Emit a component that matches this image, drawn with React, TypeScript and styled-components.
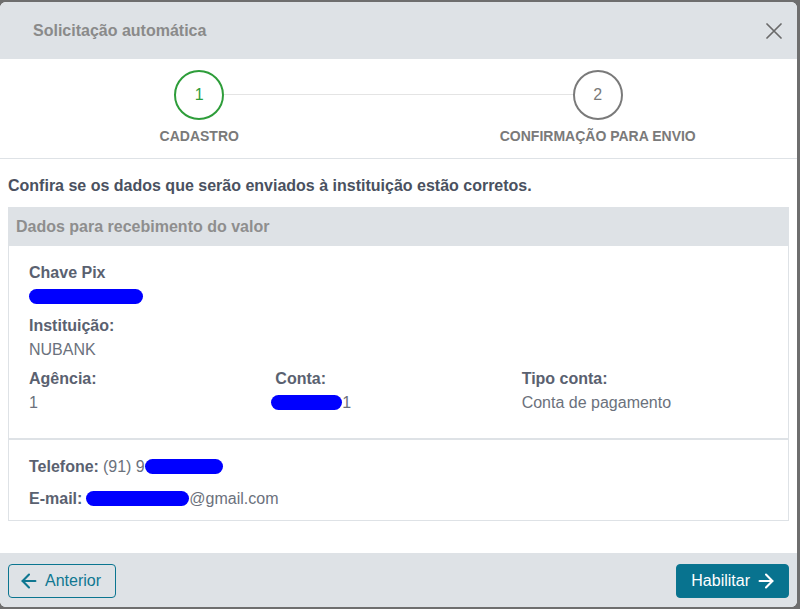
import React from 'react';
import styled, { createGlobalStyle } from 'styled-components';
import { ArrowLeft, ArrowRight } from 'lucide-react';

const GlobalStyle = createGlobalStyle`
  html, body {
    margin: 0;
    padding: 0;
    background: #6e6e6e;
    font-family: "Liberation Sans", Arial, sans-serif;
  }
  * {
    box-sizing: border-box;
  }
`;

const Backdrop = styled.div`
  padding-top: 2px;
  height: 609px;
`;

const Modal = styled.div`
  width: 797px;
  height: 605px;
  background: #fff;
  border-radius: 6px;
  overflow: hidden;
  display: flex;
  flex-direction: column;
`;

const Header = styled.div`
  height: 57px;
  flex-shrink: 0;
  background: #dee2e6;
  display: flex;
  align-items: center;
  justify-content: space-between;
  padding: 0 15px 0 33px;
`;

const Title = styled.h1`
  margin: 0;
  font-size: 16px;
  font-weight: bold;
  color: #8a8a8a;
`;

const CloseButton = styled.button`
  border: none;
  background: none;
  padding: 0;
  width: 16px;
  height: 16px;
  display: flex;
  cursor: pointer;
`;

const Stepper = styled.div`
  display: grid;
  grid-template-columns: 1fr 1fr;
  height: 100px;
  flex-shrink: 0;
  padding-top: 11px;
  border-bottom: 1px solid #dee2e6;
`;

const Step = styled.div<{ $connect?: boolean }>`
  position: relative;
  display: flex;
  flex-direction: column;
  align-items: center;

  &::after {
    content: '';
    display: ${(p) => (p.$connect ? 'block' : 'none')};
    position: absolute;
    top: 24px;
    left: calc(50% + 25px);
    width: calc(100% - 50px);
    height: 1px;
    background: #e4e4e4;
  }
`;

const Circle = styled.div<{ $active?: boolean }>`
  width: 50px;
  height: 50px;
  border-radius: 50%;
  border: 2px solid ${(p) => (p.$active ? '#2e9d3a' : '#7a7a7a')};
  color: ${(p) => (p.$active ? '#2e9d3a' : '#7a7a7a')};
  background: #fff;
  display: flex;
  align-items: center;
  justify-content: center;
  font-size: 16px;
`;

const StepLabel = styled.div`
  margin-top: 8px;
  font-size: 14px;
  line-height: 16px;
  font-weight: bold;
  color: #7a7a7a;
`;

const Body = styled.div`
  flex: 1;
  padding: 15px 8px 0;
`;

const Intro = styled.p`
  margin: 0 0 9px;
  font-size: 16px;
  line-height: 24px;
  font-weight: bold;
  color: #4a5160;
`;

const Card = styled.div`
  border: 1px solid #dee2e6;
  border-top: none;
`;

const CardHeader = styled.div`
  height: 39px;
  background: #dee2e6;
  display: flex;
  align-items: center;
  padding-left: 7px;
  font-size: 16px;
  font-weight: bold;
  color: #8e8e8e;
`;

const Section = styled.div<{ $divider?: boolean }>`
  padding: ${(p) => (p.$divider ? '15px 20px 18px' : '15px 20px 9px')};
  border-bottom: ${(p) => (p.$divider ? '2px solid #dee2e6' : 'none')};
`;

const Field = styled.div`
  margin-bottom: 5px;
  font-size: 16px;
  line-height: 24px;
`;

const Label = styled.div`
  font-weight: bold;
  color: #5a6170;
`;

const Value = styled.div`
  color: #6b717c;
`;

const Columns = styled.div`
  display: grid;
  grid-template-columns: repeat(3, 1fr);
`;

const InlineField = styled.div`
  margin-bottom: 8px;
  font-size: 16px;
  line-height: 24px;
  color: #6b717c;

  &:last-child {
    margin-bottom: 0;
  }
`;

const InlineLabel = styled.span`
  font-weight: bold;
  color: #5a6170;
  margin-right: 4px;
`;

const Redacted = styled.span<{ $w: number }>`
  display: inline-block;
  width: ${(p) => p.$w}px;
  height: 15px;
  border-radius: 8px;
  background: #0000ff;
  vertical-align: -2px;
`;

const Footer = styled.div`
  height: 54px;
  flex-shrink: 0;
  background: #dee2e6;
  display: flex;
  align-items: center;
  justify-content: space-between;
  padding: 1px 8px 0 8px;
`;

const Button = styled.button<{ $primary?: boolean }>`
  height: 34px;
  display: flex;
  align-items: center;
  gap: 5px;
  padding: ${(p) => (p.$primary ? '0 11px 0 14px' : '0 14px 0 9px')};
  border-radius: 4px;
  font-family: inherit;
  font-size: 16px;
  cursor: pointer;
  border: 1px solid #0a7590;
  background: ${(p) => (p.$primary ? '#08738f' : 'transparent')};
  color: ${(p) => (p.$primary ? '#fff' : '#0f7791')};
`;

export default function App() {
  return (
    <>
      <GlobalStyle />
      <Backdrop>
        <Modal>
          <Header>
            <Title>Solicitação automática</Title>
            <CloseButton aria-label="Fechar">
              <svg width="16" height="16" viewBox="0 0 16 16">
                <path d="M1 1L15 15M15 1L1 15" stroke="#6a6a6a" strokeWidth="1.7" strokeLinecap="round" />
              </svg>
            </CloseButton>
          </Header>

          <Stepper>
            <Step $connect>
              <Circle $active>1</Circle>
              <StepLabel>CADASTRO</StepLabel>
            </Step>
            <Step>
              <Circle>2</Circle>
              <StepLabel>CONFIRMAÇÃO PARA ENVIO</StepLabel>
            </Step>
          </Stepper>

          <Body>
            <Intro>Confira se os dados que serão enviados à instituição estão corretos.</Intro>
            <Card>
              <CardHeader>Dados para recebimento do valor</CardHeader>
              <Section $divider>
                <Field>
                  <Label>Chave Pix</Label>
                  <Value>
                    <Redacted $w={114} />
                  </Value>
                </Field>
                <Field>
                  <Label>Instituição:</Label>
                  <Value>NUBANK</Value>
                </Field>
                <Columns>
                  <Field>
                    <Label>Agência:</Label>
                    <Value>1</Value>
                  </Field>
                  <Field>
                    <Label>Conta:</Label>
                    <Value>
                      <Redacted $w={71} style={{ marginLeft: -4 }} />1
                    </Value>
                  </Field>
                  <Field>
                    <Label>Tipo conta:</Label>
                    <Value>Conta de pagamento</Value>
                  </Field>
                </Columns>
              </Section>
              <Section>
                <InlineField>
                  <InlineLabel>Telefone:</InlineLabel>(91) 9<Redacted $w={78} />
                </InlineField>
                <InlineField>
                  <InlineLabel>E-mail:</InlineLabel>
                  <Redacted $w={103} />@gmail.com
                </InlineField>
              </Section>
            </Card>
          </Body>

          <Footer>
            <Button>
              <ArrowLeft size={22} strokeWidth={2.3} />
              Anterior
            </Button>
            <Button $primary>
              Habilitar
              <ArrowRight size={22} strokeWidth={2.3} />
            </Button>
          </Footer>
        </Modal>
      </Backdrop>
    </>
  );
}
